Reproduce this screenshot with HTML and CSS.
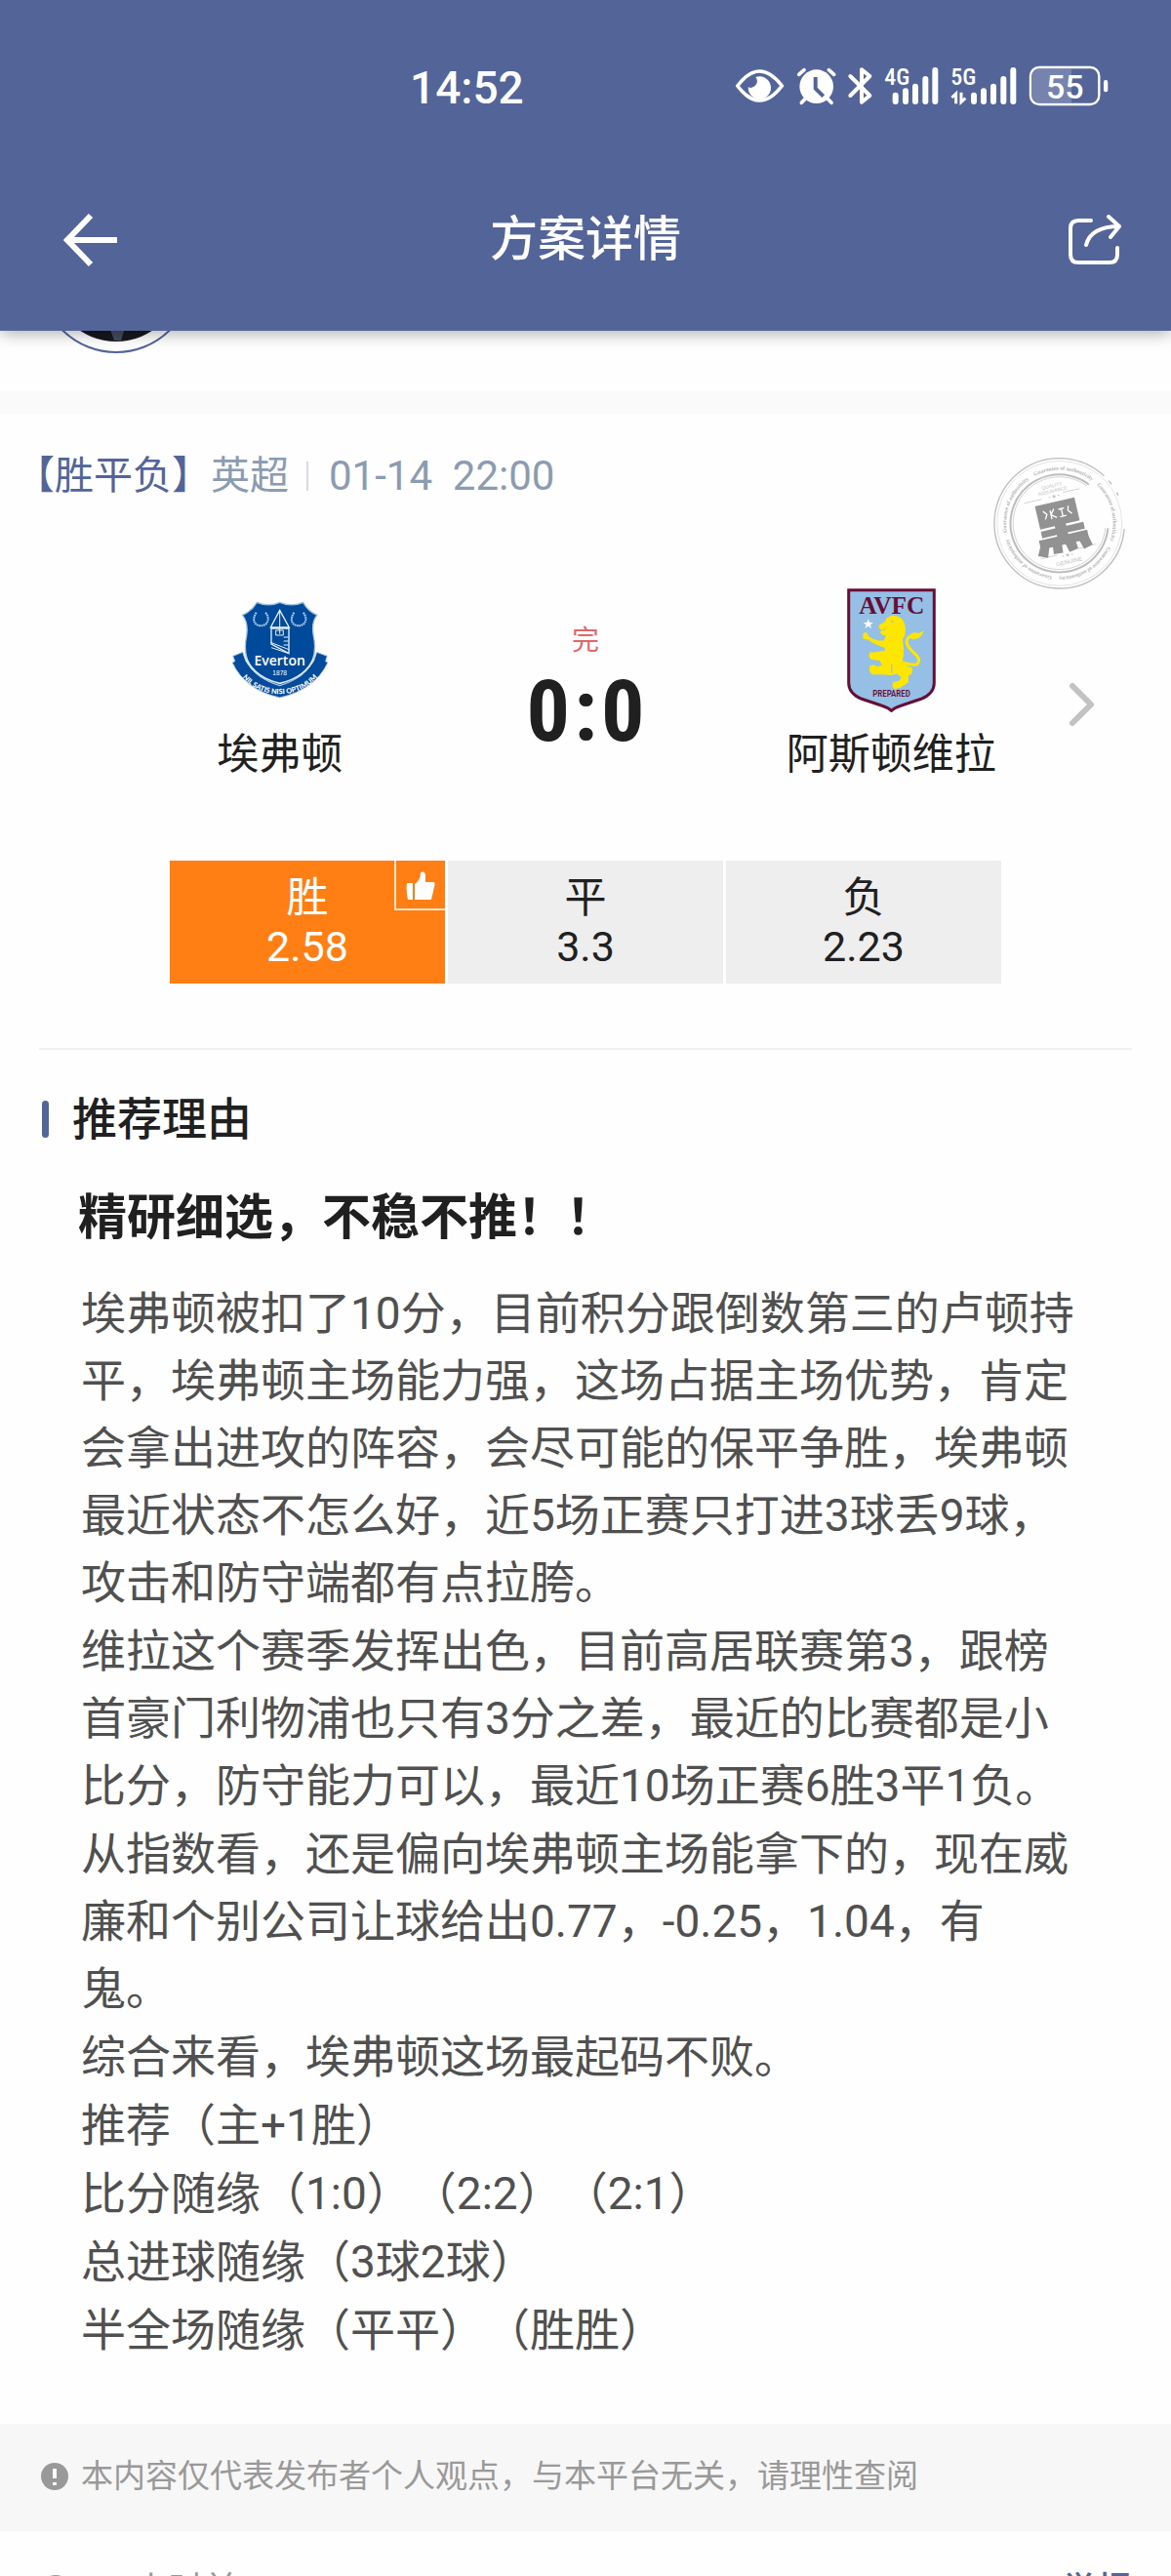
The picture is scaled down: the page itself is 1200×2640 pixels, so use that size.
FILE: index.html
```html
<!DOCTYPE html>
<html lang="zh-CN">
<head>
<meta charset="utf-8">
<meta name="viewport" content="width=device-width, initial-scale=1">
<title>方案详情</title>
<link rel="stylesheet" href="styles.css">
</head>
<body>
<div class="app">
  <header class="top">
    <div class="status">
      <time class="clock">14:52</time>
      <svg class="status-icons" viewBox="90 75 1170 140" aria-hidden="true">
        <g fill="none" stroke="#fff" stroke-width="11" stroke-linecap="round" stroke-linejoin="round">
          <path d="M104 144Q172 54 241 144Q172 234 104 144Z"/>
          <path d="M293 109L309 95M401 109L385 95M301 196L316 180M393 196L378 180"/>
          <path d="M451 114L511 174L486 194V94L511 114L451 174" stroke-width="12"/>
          <rect x="1005" y="87" width="211" height="114" rx="27" stroke-width="7"/>
        </g>
        <path d="M160 117a35 35 0 1 1-23 31a20 20 0 0 0 23-31Z" fill="#fff"/>
        <circle cx="347" cy="146" r="52" fill="#fff"/>
        <path d="M344 117V152L368 176" fill="none" stroke="#536499" stroke-width="12"/>
        <path d="M590 173V192M621 160V192M651 146V192M682 123V192M712 96V192M831 173V192M861 160V192M891 146V192M922 123V192M952 96V192" stroke="#fff" stroke-width="18" stroke-linecap="round"/>
        <path d="M763 180L776 168V199M792 164V194L805 182" fill="none" stroke="#fff" stroke-width="9"/>
        <path d="M1131 92H1034Q1010 92 1010 116V172Q1010 196 1034 196H1131Z" fill="#fff" opacity=".2"/>
        <rect x="1230" y="126" width="13" height="37" rx="6" fill="#fff"/>
        <g fill="#fff" font-family="Roboto, sans-serif" font-weight="500">
          <text x="556" y="142" font-size="72" font-family="Roboto Condensed, Roboto, sans-serif">4G</text>
          <text x="760" y="142" font-size="72" font-family="Roboto Condensed, Roboto, sans-serif">5G</text>
          <text x="1111" y="183" font-size="102" text-anchor="middle">55</text>
        </g>
      </svg>
    </div>
    <nav class="nav">
      <button class="icon-btn back" type="button" aria-label="返回">
        <svg width="56" height="56" viewBox="0 0 56 56"><path d="M28 3L4 28L28 53M4 28H55" fill="none" stroke="#fff" stroke-width="6"/></svg>
      </button>
      <h1 class="nav-title">方案详情</h1>
      <button class="icon-btn share" type="button" aria-label="分享">
        <svg width="56" height="52" viewBox="0 0 56 52"><path d="M24 6H11Q3 6 3 14V41Q3 49 11 49H43Q51 49 51 41V34M19 31Q24 12 53 12M42 2L53 12L44 23" fill="none" stroke="#fff" stroke-width="4" stroke-linecap="round" stroke-linejoin="round"/></svg>
      </button>
    </nav>
  </header>

  <main class="content">
    <div class="author">
      <svg class="avatar" width="158" height="158" viewBox="0 0 158 158" aria-hidden="true">
        <circle cx="79" cy="79" r="78" fill="#fff" stroke="#536499" stroke-width="2"/>
        <circle cx="79" cy="79" r="67" fill="#17181f"/>
        <path d="M70 125H90L84 145H77Z" fill="#454c60"/>
      </svg>
    </div>

    <section class="match">
      <p class="meta"><span class="play">【胜平负】</span><span>英超</span><i class="bar"></i><time class="kickoff">01-14&nbsp; 22:00</time></p>
      <svg class="stamp" viewBox="110 82 410 410" aria-hidden="true">
        <defs><path id="ring" d="M314 453A165 165 0 1 1 315 453"/></defs>
        <g fill="none" stroke="#bdbdbd">
          <circle cx="314" cy="288" r="201" stroke-width="4" stroke-dasharray="1080 20 14 30 10 109" transform="rotate(5 314 288)"/>
          <circle cx="314" cy="288" r="193" stroke-width="2" stroke="#d6d6d6"/>
          <path d="M464 303A151 151 0 1 1 405 168" stroke-width="6"/>
          <path d="M456 303A143 143 0 1 1 398 172" stroke-width="2"/>
          <path d="M205 226L258 214M325 192L376 181M256 398L307 386M373 366L427 352" stroke-width="2"/>
        </g>
        <g font-family="Liberation Serif, serif" font-size="17" font-weight="700" fill="#b4b4b4" transform="rotate(8 314 288)">
          <text><textPath href="#ring">Guarantee of authenticity</textPath></text>
          <text><textPath href="#ring" startOffset="20%">Guarantee of authenticity</textPath></text>
          <text><textPath href="#ring" startOffset="40%">Guarantee of authenticity</textPath></text>
          <text><textPath href="#ring" startOffset="60%">Guarantee of authenticity</textPath></text>
          <text><textPath href="#ring" startOffset="80%">Guarantee of authenticity</textPath></text>
        </g>
        <g transform="rotate(-13 318 294)">
          <path d="M256 222H376V290H332V302H386V318H332V328H392V346L398 372L374 378L366 352H350L352 374L328 378L322 352H306L304 376L280 374L282 352H266L256 380L232 370L244 346V328H302V318H256V302H302V290H256Z" fill="#929292" stroke="#929292" stroke-width="5"/>
          <path d="M274 240L284 252L276 266M296 242V270M308 240L296 256L312 268M322 244H340M331 244V268M322 268H342M354 240L350 254L360 266" fill="none" stroke="#fff" stroke-width="4"/>
          <g text-anchor="middle" font-family="Liberation Sans, sans-serif" font-size="15" fill="#c2c2c2">
            <text x="318" y="174">QUALITY</text><text x="318" y="190">ASSURANCE</text><text x="318" y="207">• ★ •</text>
            <text x="318" y="394">• ★ •</text><text x="318" y="415" font-size="18">GENUINE</text>
          </g>
        </g>
      </svg>

      <a class="teams" href="#match">
        <span class="team">
          <span class="crest">
            <svg width="100" height="100" viewBox="113 115 300 300" role="img" aria-label="Everton">
              <defs><path id="motto" d="M126 318Q172 400 262 401Q352 400 400 318"/></defs>
              <path d="M118 284L148 272L158 300Q190 356 262 372Q334 356 366 300L376 272L408 284L403 300L410 304Q370 388 262 412Q155 388 116 304L124 300Z" fill="#064c9c" stroke="#b9cfe6" stroke-width="3"/>
              <path d="M192 119Q228 134 262 119Q298 134 334 119Q349 146 377 158Q358 180 366 222Q390 335 262 375Q136 335 160 222Q166 180 147 158Q176 146 192 119Z" fill="#004a9c" stroke="#a9c4e0" stroke-width="4"/>
              <path d="M159 292Q186 350 262 368Q340 350 366 292" fill="none" stroke="#dbe8f5" stroke-width="5"/>
              <g fill="none" stroke="#e6eff8" stroke-width="4">
                <path d="M262 143L234 196H291ZM236 199V247L290 276V199Z"/>
                <path d="M262 143V196M236 258L290 276M234 242L290 264M250 205H273V220H250ZM274 226H289M274 238H289M274 250H289M262 200V216" stroke-width="3"/>
              </g>
              <g fill="none" stroke="#b9d1e9" stroke-width="6" stroke-dasharray="5 2">
                <path d="M190 150Q174 176 192 188Q206 194 219 186Q234 170 218 150"/>
                <path d="M306 150Q290 176 308 188Q322 194 335 186Q350 170 334 150"/>
              </g>
              <g fill="#fff" text-anchor="middle">
                <text x="262" y="313" font-family="Open Sans, sans-serif" font-weight="600" font-size="42">Everton</text>
                <text x="262" y="343" font-family="Liberation Sans, sans-serif" font-size="20">1878</text>
                <text font-family="Lato, sans-serif" font-weight="900" font-size="22"><textPath href="#motto" startOffset="50%">NIL SATIS NISI OPTIMUM</textPath></text>
              </g>
            </svg>
          </span>
          <span class="team-name">埃弗顿</span>
        </span>
        <span class="result">
          <span class="state">完</span>
          <span class="score"><span>0</span><span>:</span><span>0</span></span>
        </span>
        <span class="team">
          <span class="crest">
            <svg width="91" height="127" viewBox="263 68 272 380" role="img" aria-label="Aston Villa">
              <path d="M268 73H530V358Q530 390 490 407L430 427Q410 433 399 443Q388 433 368 427L308 407Q268 390 268 358Z" fill="#95bfe5" stroke="#670e36" stroke-width="9"/>
              <text x="400" y="145" text-anchor="middle" font-family="Liberation Serif, serif" font-weight="700" font-size="76" fill="#670e36">AVFC</text>
              <path d="M328 162L332 173L343 173L334 180L338 191L328 184L318 191L322 180L313 173L324 173Z" fill="#fff"/>
              <path d="M362 180L380 170L385 158L402 151Q425 151 434 165Q446 185 440 212L433 224Q440 260 433 290Q440 298 446 306L464 312L461 330L451 336V356L428 372L410 377L402 370L404 356L424 350L429 340L416 330L398 334L372 332L340 332L332 322V306L346 302L356 308L370 304L364 290L336 286L330 276L332 264L348 264L380 258L378 250Q346 240 328 226L312 222V206L322 203L330 215Q350 230 376 228L382 212L370 210L364 202L370 196L360 190Z" fill="#ffe600"/>
              <path d="M436 296Q462 304 476 302Q494 286 466 264Q438 238 449 222Q454 214 468 216" fill="none" stroke="#ffe600" stroke-width="9"/>
              <path d="M452 214Q464 198 482 206L498 198Q493 222 464 224Z" fill="#ffe600"/>
              <path d="M396 168L406 171M371 195L382 194M400 300V328" stroke="#95bfe5" stroke-width="3"/>
              <text x="399" y="400" text-anchor="middle" font-family="Roboto Condensed, Roboto, sans-serif" font-weight="500" font-size="27" fill="#670e36">PREPARED</text>
            </svg>
          </span>
          <span class="team-name">阿斯顿维拉</span>
        </span>
        <svg class="chevron" width="30" height="48" viewBox="0 0 30 48" aria-hidden="true"><path d="M5 5L24 24L5 43" fill="none" stroke="#c2c2c2" stroke-width="6" stroke-linecap="round" stroke-linejoin="round"/></svg>
      </a>

      <div class="odds">
        <button class="odd picked" type="button">
          <span>胜</span><span>2.58</span>
          <span class="pick-mark">
            <svg width="30" height="30" viewBox="0 0 30 30" aria-hidden="true"><path d="M1 12H7V29H2Q0 20 1 12ZM9 13Q15 9 15 1Q20-1 20 5V11H29Q30 13 29 16L26 29H9Z" fill="#fff"/></svg>
          </span>
        </button>
        <button class="odd" type="button"><span>平</span><span>3.3</span></button>
        <button class="odd" type="button"><span>负</span><span>2.23</span></button>
      </div>
    </section>

    <article class="reason">
      <h2 class="section-title">推荐理由</h2>
      <h3 class="headline">精研细选，不稳不推！！</h3>
      <div class="body">
        <p>埃弗顿被扣了10分，目前积分跟倒数第三的卢顿持平，埃弗顿主场能力强，这场占据主场优势，肯定会拿出进攻的阵容，会尽可能的保平争胜，埃弗顿最近状态不怎么好，近5场正赛只打进3球丢9球，攻击和防守端都有点拉胯。</p>
        <p>维拉这个赛季发挥出色，目前高居联赛第3，跟榜首豪门利物浦也只有3分之差，最近的比赛都是小比分，防守能力可以，最近10场正赛6胜3平1负。</p>
        <p>从指数看，还是偏向埃弗顿主场能拿下的，现在威廉和个别公司让球给出0.77，-0.25，1.04，有<br>鬼。</p>
        <p>综合来看，埃弗顿这场最起码不败。</p>
        <p>推荐（主+1胜）</p>
        <p>比分随缘（1:0）（2:2）（2:1）</p>
        <p>总进球随缘（3球2球）</p>
        <p>半全场随缘（平平）（胜胜）</p>
      </div>
    </article>

    <p class="notice">
      <svg width="28" height="28" viewBox="0 0 28 28" aria-hidden="true"><circle cx="14" cy="14" r="14" fill="#999"/><path d="M14 6V16M14 20V23" stroke="#fff" stroke-width="4"/></svg>
      <span>本内容仅代表发布者个人观点，与本平台无关，请理性查阅</span>
    </p>

    <footer class="foot">
      <svg width="34" height="34" viewBox="0 0 34 34" aria-hidden="true"><circle cx="17" cy="17" r="15" fill="none" stroke="#999" stroke-width="2"/><path d="M17 9V18H24" fill="none" stroke="#999" stroke-width="2"/></svg>
      <time>14 小时前</time>
      <a class="report" href="#report">举报</a>
    </footer>
  </main>
</div>
</body>
</html>
```
FILE: styles.css
```css
* { box-sizing: border-box; }

body {
  margin: 0;
  background: #fefefe;
  color: #202020;
  font-family: Roboto, "Noto Sans CJK SC", sans-serif;
  text-spacing-trim: space-all;
}

h1, h2, h3, p { margin: 0; font-weight: 400; }
a { color: inherit; text-decoration: none; }
svg { display: block; flex: none; }
button { padding: 0; border: 0; background: none; color: inherit; font: inherit; }

.app {
  display: flex;
  flex-direction: column;
  height: 100vh;
  overflow: hidden;
}

/* Header */
.top {
  position: relative;
  z-index: 1;
  flex: none;
  padding-bottom: 27px;
  background: #536499;
  color: #fff;
  box-shadow: 0 2px 16px rgba(0, 0, 0, .35);
}
.status {
  display: flex;
  align-items: center;
  justify-content: space-between;
  height: 180px;
  padding: 0 59px 0 420px;
}
.clock { font-size: 46px; line-height: 60px; font-weight: 500; }
.status-icons { width: 390px; margin-bottom: 4px; }
.nav {
  display: grid;
  grid-template-columns: 1fr auto 1fr;
  align-items: center;
  height: 132px;
  padding: 0 50px;
}
.back { justify-self: start; padding-left: 15px; }
.share { justify-self: end; }
.nav-title { font-size: 49px; line-height: 70px; font-weight: 500; }

/* Author strip, scrolled under the header */
.content { flex: 1; min-height: 0; overflow: hidden; }
.author {
  display: flex;
  align-items: flex-end;
  height: 86px;
  padding: 0 40px 39px;
  overflow: hidden;
  border-bottom: 24px solid #fafafa;
}

/* Match */
.match { position: relative; padding-top: 39px; }
.meta {
  display: flex;
  align-items: center;
  padding-left: 16px;
  color: #8b9bb0;
  font-size: 40px;
  line-height: 48px;
}
.play { color: #536499; }
.kickoff { font-size: 42px; }
.bar { width: 2px; height: 30px; margin: 0 21px 0 18px; background: #d8dce2; }
.stamp { position: absolute; top: 43px; right: 46px; width: 136px; height: 136px; }

.teams {
  display: grid;
  grid-template-columns: 130px 1fr 1fr 1fr 130px;
  margin-top: 90px;
}
.team { display: flex; flex-direction: column; align-items: center; }
.team:first-child { grid-column: 2; }
.crest { display: flex; align-items: center; height: 128px; }
.team-name { margin-top: 17px; font-size: 43px; line-height: 52px; white-space: nowrap; }
.result { display: flex; flex-direction: column; align-items: center; padding-top: 35px; }
.state { color: #e0676a; font-size: 28px; line-height: 40px; }
.score {
  display: flex;
  gap: 4px;
  margin-top: 8px;
  font-family: "Roboto Condensed", Roboto, sans-serif;
  font-size: 88px;
  line-height: 88px;
  font-weight: 700;
}
.chevron { margin: 96px 0 0 24px; }

.odds {
  display: grid;
  grid-template-columns: repeat(3, 1fr);
  gap: 3px;
  margin: 83px 174px 0;
}
.odd {
  position: relative;
  display: flex;
  flex-direction: column;
  align-items: center;
  padding: 13px 0;
  background: #eee;
  font-size: 43px;
  line-height: 50px;
}
.picked { background: #ff7f14; color: #fff; }
.pick-mark {
  position: absolute;
  top: 0;
  right: 0;
  padding: 11px 10px 8px;
  border: solid #ffe3c8;
  border-width: 0 0 2px 2px;
}

/* Recommendation */
.reason { margin: 66px 40px 0; border-top: 2px solid #f0f0f0; padding-top: 41px; }
.section-title {
  display: flex;
  align-items: center;
  gap: 24px;
  padding-left: 3px;
  font-size: 46px;
  line-height: 60px;
  font-weight: 500;
}
.section-title::before { content: ""; width: 7px; height: 38px; border-radius: 4px; background: #536499; }
.headline { margin-top: 36px; padding-left: 40px; font-size: 50px; line-height: 70px; font-weight: 700; }
.body {
  display: grid;
  gap: 1px;
  margin-top: 29px;
  padding: 0 43px;
  color: #505050;
  font-size: 46px;
  line-height: 69px;
}

/* Notice and footer */
.notice {
  display: flex;
  align-items: center;
  gap: 13px;
  margin-top: 61px;
  padding: 30px 42px 32px;
  background: #f7f7f7;
  color: #999;
  font-size: 33px;
  line-height: 48px;
}
.foot {
  display: flex;
  align-items: center;
  gap: 13px;
  padding: 37px 40px;
  color: #999;
  font-size: 36px;
  line-height: 48px;
}
.report { margin-left: auto; color: #536499; font-weight: 500; }
```
